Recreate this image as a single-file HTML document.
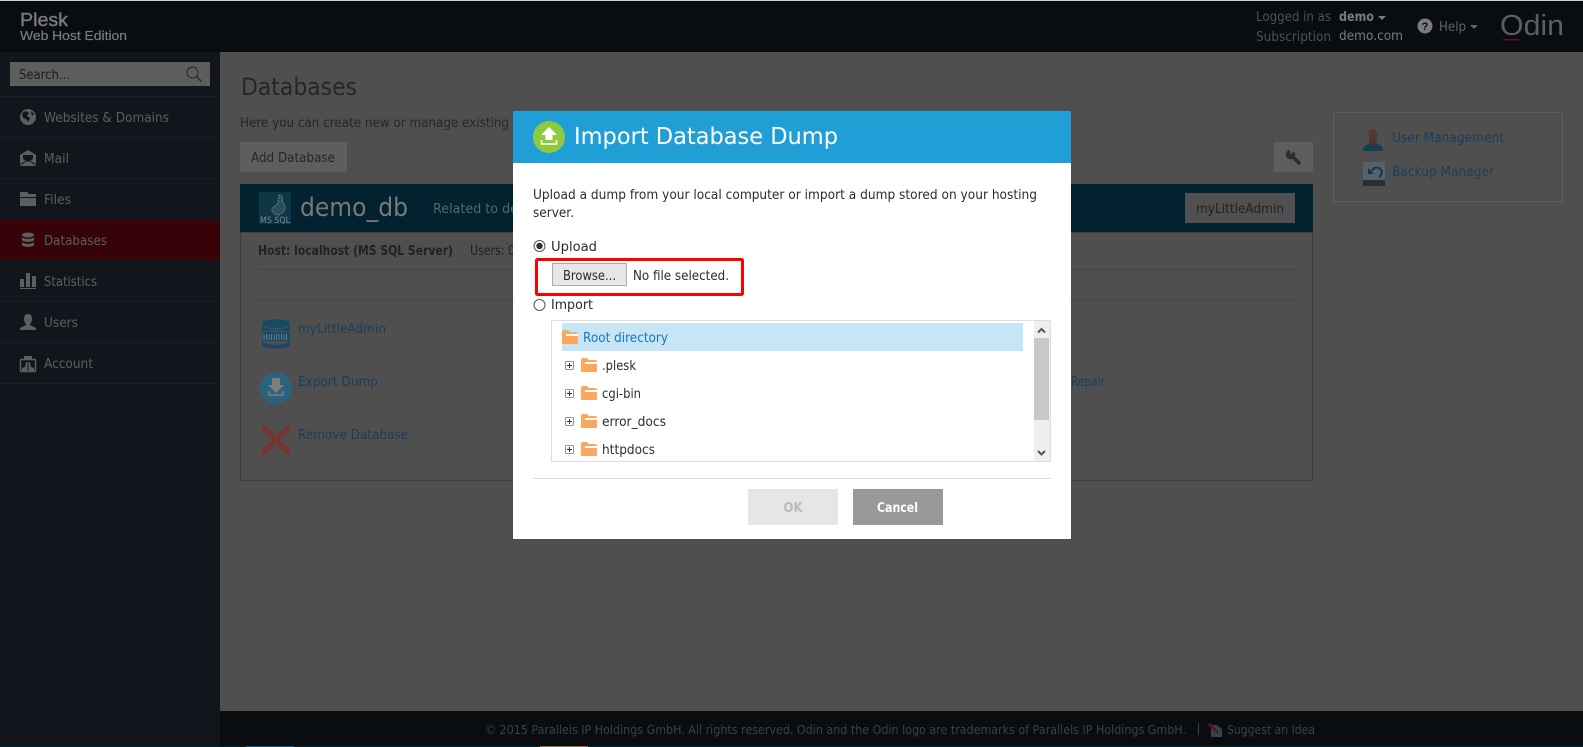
<!DOCTYPE html>
<html>
<head>
<meta charset="utf-8">
<title>Import Database Dump</title>
<style>
html,body{margin:0;padding:0;background:#4f4f4f;width:1583px;height:747px;overflow:hidden}
svg{display:block}
text{font-family:"DejaVu Sans","Liberation Sans",sans-serif;font-size:13px;white-space:pre}
.a{font-family:"Liberation Sans",sans-serif}
.nav{fill:#5c5e60}
.lnk{fill:#1a3e5a}
.drk{fill:#262626}
.dlg{fill:#2c2c2c}
.b{font-weight:bold}
</style>
</head>
<body>
<svg width="1583" height="747" viewBox="0 0 1583 747" xmlns="http://www.w3.org/2000/svg">
<defs>
<g id="fld">
<path d="M0 2q0-2 2-2h4l2 2h6q2 0 2 2v9q0 1-1 1H1q-1 0-1-1z" fill="#fca85c"/>
<path d="M4 4h12v2H4z" fill="#fff"/>
</g>
<g id="plus">
<rect x="0.5" y="0.5" width="8" height="8" rx="1" fill="#fff" stroke="#8a9aa3"/>
<path d="M2 4.5h5M4.5 2v5" stroke="#333" stroke-width="1"/>
</g>
</defs>

<!-- backgrounds -->
<rect width="1583" height="747" fill="#4f4f4f"/>
<rect y="0" width="1583" height="52" fill="#090c10"/>
<rect y="0" width="1583" height="1" fill="#cfcfcf"/>
<rect y="52" width="220" height="695" fill="#12161c"/>
<rect x="220" y="711" width="1363" height="36" fill="#090d10"/>
<rect x="0" y="746" width="1583" height="1" fill="#03222f"/>
<rect x="246" y="746" width="48" height="1" fill="#14557a"/>
<rect x="540" y="746" width="48" height="1" fill="#8a6d5a"/>

<!-- top bar -->
<text x="20" y="26" class="a" style="font-size:18px" fill="#7b7b7b" stroke="#7b7b7b" stroke-width="0.4" textLength="48" lengthAdjust="spacingAndGlyphs">Plesk</text>
<text x="20" y="40" class="a" style="font-size:13px" fill="#7b7b7b" stroke="#7b7b7b" stroke-width="0.2" textLength="107" lengthAdjust="spacingAndGlyphs">Web Host Edition</text>
<text x="1256" y="21" fill="#4f5153" textLength="75" lengthAdjust="spacingAndGlyphs">Logged in as</text>
<text x="1339" y="21" class="b" fill="#7c7c7c" textLength="35" lengthAdjust="spacingAndGlyphs">demo</text>
<path d="M1378 16h8l-4 4z" fill="#7c7c7c"/>
<text x="1256" y="41" fill="#4f5153" textLength="75" lengthAdjust="spacingAndGlyphs">Subscription</text>
<text x="1339" y="40" fill="#7c7c7c" textLength="64" lengthAdjust="spacingAndGlyphs">demo.com</text>
<circle cx="1425" cy="26" r="7.5" fill="#7c7c7c"/>
<text x="1425" y="30" class="a b" style="font-size:11px" text-anchor="middle" fill="#090c10">?</text>
<text x="1439" y="31" fill="#5f6163" textLength="27" lengthAdjust="spacingAndGlyphs">Help</text>
<path d="M1470 25h8l-4 4z" fill="#5f6163"/>
<text x="1500" y="35" class="a" style="font-size:29px" fill="#5c5e60" textLength="64" lengthAdjust="spacingAndGlyphs">Odin</text>
<rect x="1503" y="39" width="16" height="1.5" fill="#6b1015"/>

<!-- sidebar -->
<rect x="10" y="62" width="200" height="24" fill="#5e5e5e"/>
<text x="19" y="79" fill="#1a1a1a" textLength="51" lengthAdjust="spacingAndGlyphs">Search...</text>
<circle cx="192.500" cy="72.500" r="5.500" fill="none" stroke="#2e2e2e" stroke-width="1.200"/>
<path d="M196.500 76.500l5 5" stroke="#2e2e2e" stroke-width="1.600"/>
<g fill="#1a1e24">
<rect y="96" width="220" height="1"/>
<rect y="137" width="220" height="1"/>
<rect y="178" width="220" height="1"/>
<rect y="301" width="220" height="1"/>
<rect y="342" width="220" height="1"/>
<rect y="383" width="220" height="1"/>
</g>
<rect y="220" width="220" height="40" fill="#360308"/>

<circle cx="28" cy="117" r="8" fill="#5c5e60"/>
<path d="M22 113l4-2 3 2-2 3 3 2-2 4-2-3-3-1zM31 111l3 3-2 2z" fill="#12161c"/>
<text x="44" y="122" class="nav" textLength="125" lengthAdjust="spacingAndGlyphs">Websites &amp; Domains</text>

<path d="M20 155l8-5 8 5v11H20z" fill="#5c5e60"/>
<path d="M23 155h10v4l-5 3-5-3z" fill="#12161c"/>
<path d="M20 165l6-4M36 165l-6-4" stroke="#12161c" stroke-width="1"/>
<text x="44" y="163" class="nav" textLength="25" lengthAdjust="spacingAndGlyphs">Mail</text>

<path d="M20 192h7l2 2h7v3H20z" fill="#5c5e60"/>
<path d="M20 198h16v8H20z" fill="#5c5e60"/>
<text x="44" y="204" class="nav" textLength="27" lengthAdjust="spacingAndGlyphs">Files</text>

<g fill="#5c5e60">
<ellipse cx="28" cy="235" rx="6" ry="2.500"/>
<path d="M22 237.500q6 3 12 0v3q-6 3-12 0z"/>
<path d="M22 242.500q6 3 12 0v3q-6 3-12 0z"/>
</g>
<text x="44" y="245" class="nav" textLength="63" lengthAdjust="spacingAndGlyphs">Databases</text>

<g fill="#5c5e60">
<rect x="20" y="279" width="4" height="8"/>
<rect x="26" y="273" width="4" height="14"/>
<rect x="32" y="276" width="4" height="11"/>
<rect x="20" y="288" width="16" height="1"/>
</g>
<text x="44" y="286" class="nav" textLength="53" lengthAdjust="spacingAndGlyphs">Statistics</text>

<path d="M28 314c3 0 4 2 4 5 0 2-1 4-2 5v1l6 3v2H20v-2l6-3v-1c-1-1-2-3-2-5 0-3 1-5 4-5z" fill="#5c5e60"/>
<text x="44" y="327" class="nav" textLength="34" lengthAdjust="spacingAndGlyphs">Users</text>

<rect x="20.500" y="359.500" width="15" height="12" rx="1" fill="none" stroke="#5c5e60" stroke-width="1.500"/>
<rect x="24" y="356" width="8" height="3" fill="#5c5e60"/>
<path d="M22 371v-3l3-1 1-5h4l1 5 3 1v3z" fill="#5c5e60"/>
<path d="M28 362v9" stroke="#12161c" stroke-width="1"/>
<text x="44" y="368" class="nav" textLength="49" lengthAdjust="spacingAndGlyphs">Account</text>

<!-- main -->
<text x="241" y="95" style="font-size:24px" fill="#262626" textLength="116" lengthAdjust="spacingAndGlyphs">Databases</text>
<text x="240" y="127" class="drk" textLength="269" lengthAdjust="spacingAndGlyphs">Here you can create new or manage existing</text>
<rect x="240" y="142" width="107" height="30" fill="#5e5e5e"/>
<text x="251" y="162" fill="#262626" textLength="84" lengthAdjust="spacingAndGlyphs">Add Database</text>

<rect x="1274" y="142" width="39" height="30" fill="#5e5e5e"/>
<circle cx="1290.500" cy="154.500" r="4.800" fill="#2f2f2f"/>
<path d="M1290.500 154.500l-1-6.500 6.500 1.500z" fill="#5e5e5e"/>
<path d="M1292.500 156.500l6.500 6.500" stroke="#2f2f2f" stroke-width="3.600" stroke-linecap="round"/>

<rect x="240.500" y="232.500" width="1072" height="248" fill="none" stroke="#3e3e3e"/>
<rect x="240" y="184" width="1073" height="48" fill="#03222f"/>
<rect x="259" y="192" width="32" height="32" fill="#0e3646"/>
<path d="M279 195c4 1 4 4 3 6l3 5c1 3-2 7-6 9-3 0-7-2-7-5 0-3 4-4 6-7 1-2 0-5 1-8z" fill="#2a4d5c" stroke="#5d7886" stroke-width="1.200" stroke-dasharray="2 1"/>
<text x="260" y="223" style="font-size:9px" fill="#7b8b93" textLength="30" lengthAdjust="spacingAndGlyphs">MS SQL</text>
<text x="300" y="216" style="font-size:26px" fill="#787878" textLength="108" lengthAdjust="spacingAndGlyphs">demo_db</text>
<text x="433" y="213" fill="#55686f" textLength="85" lengthAdjust="spacingAndGlyphs">Related to de</text>
<rect x="1185" y="193" width="110" height="30" fill="#505050"/>
<text x="1196" y="213" fill="#222" textLength="88" lengthAdjust="spacingAndGlyphs">myLittleAdmin</text>

<text x="258" y="255" class="b" fill="#222" textLength="195" lengthAdjust="spacingAndGlyphs">Host: localhost (MS SQL Server)</text>
<text x="470" y="255" fill="#222" textLength="45" lengthAdjust="spacingAndGlyphs">Users: 0</text>
<rect x="258" y="269" width="1037" height="1" fill="#444"/>
<rect x="258" y="300" width="1037" height="1" fill="#444"/>

<g fill="#174a66">
<ellipse cx="276" cy="323.500" rx="14" ry="4.500"/>
<path d="M262 326q14 7 28 0v5H262z"/>
<path d="M262 332h28v9H262z"/>
<path d="M262 342q14 6 28 0v2c0 3-6 4.500-14 4.500s-14-1.500-14-4.500z"/>
</g>
<path d="M264 334v6M266.500 334v6M269 334v6M271.500 334v6M274 334v6M276.500 334v6M279 334v6M281.500 334v6M284 334v6M286.500 334v6" stroke="#6b8594" stroke-width="0.900"/>
<text x="298" y="333" class="lnk" textLength="88" lengthAdjust="spacingAndGlyphs">myLittleAdmin</text>

<circle cx="276" cy="388" r="16" fill="#2a627f"/>
<path d="M272 378h8v7h4l-8 8-8-8h4z" fill="#7f7f7f"/>
<path d="M269 391v4h14v-4" fill="none" stroke="#7f7f7f" stroke-width="1.500"/>
<text x="298" y="386" class="lnk" textLength="80" lengthAdjust="spacingAndGlyphs">Export Dump</text>

<path d="M263.500 427.500l25 25M288.500 427.500l-25 25" stroke="#723633" stroke-width="6" stroke-linecap="round"/>
<text x="298" y="439" class="lnk" textLength="110" lengthAdjust="spacingAndGlyphs">Remove Database</text>

<text x="1071" y="386" class="lnk" textLength="34" lengthAdjust="spacingAndGlyphs">Repair</text>

<!-- right box -->
<rect x="1333.500" y="112.500" width="229" height="89" fill="none" stroke="#5e5e5e"/>
<path d="M1363 150c0-5 6-6 8-7h4c2 1 8 2 8 7v1h-20z" fill="#123f57"/>
<ellipse cx="1373" cy="135" rx="4.500" ry="6" fill="#54392d"/>
<path d="M1369 140h8v4l-4 2-4-2z" fill="#4c372c"/>
<text x="1392" y="142" class="lnk" textLength="112" lengthAdjust="spacingAndGlyphs">User Management</text>
<rect x="1363" y="162" width="22" height="18" fill="#566268"/>
<rect x="1363" y="180" width="22" height="6" rx="1" fill="#2b2e30"/>
<path d="M1379 177a5 5 0 1 0-7-6" fill="none" stroke="#0f3a52" stroke-width="2"/>
<path d="M1368 168v6h6z" fill="#0f3a52"/>
<text x="1392" y="176" class="lnk" textLength="102" lengthAdjust="spacingAndGlyphs">Backup Manager</text>

<!-- footer -->
<text x="485" y="734" style="font-size:12px" fill="#3d4043" textLength="701" lengthAdjust="spacingAndGlyphs">© 2015 Parallels IP Holdings GmbH. All rights reserved. Odin and the Odin logo are trademarks of Parallels IP Holdings GmbH.</text>
<rect x="1198" y="723" width="1" height="12" fill="#3d4043"/>
<path d="M1211 725h6l5 4v8h-11z" fill="#2e4450"/>
<path d="M1208 725l2-2 9 9-1 2z" fill="#6b0f12"/>
<text x="1227" y="734" style="font-size:12px" fill="#3d4043" textLength="88" lengthAdjust="spacingAndGlyphs">Suggest an Idea</text>

<!-- dialog -->
<rect x="513" y="111" width="558" height="428" fill="#fff"/>
<rect x="513" y="111" width="558" height="52" fill="#209ed6"/>
<circle cx="549" cy="137" r="16" fill="#8fca3e"/>
<path d="M549 127l8 8h-4.500v5h-7v-5H541z" fill="#fff"/>
<path d="M541.500 140v4h15v-4" fill="none" stroke="#fff" stroke-width="1.500"/>
<text x="574" y="144" style="font-size:23px" fill="#fff" textLength="264" lengthAdjust="spacingAndGlyphs">Import Database Dump</text>

<text x="533" y="199" class="dlg" textLength="504" lengthAdjust="spacingAndGlyphs">Upload a dump from your local computer or import a dump stored on your hosting</text>
<text x="533" y="217" class="dlg" textLength="41" lengthAdjust="spacingAndGlyphs">server.</text>

<circle cx="539.500" cy="246" r="5.500" fill="#fff" stroke="#555" stroke-width="1"/>
<circle cx="539.500" cy="246" r="3.200" fill="#333"/>
<text x="551" y="251" class="dlg" textLength="46" lengthAdjust="spacingAndGlyphs">Upload</text>

<rect x="536.500" y="259.500" width="206" height="35" rx="1" fill="none" stroke="#f00" stroke-width="3"/>
<rect x="552.500" y="263.500" width="74" height="22" fill="#e6e6e6" stroke="#adadad"/>
<text x="563" y="280" class="dlg" textLength="53" lengthAdjust="spacingAndGlyphs">Browse...</text>
<text x="633" y="280" class="dlg" textLength="96" lengthAdjust="spacingAndGlyphs">No file selected.</text>

<circle cx="539.500" cy="305" r="5.500" fill="#fff" stroke="#555" stroke-width="1"/>
<text x="551" y="309" class="dlg" textLength="42" lengthAdjust="spacingAndGlyphs">Import</text>

<rect x="551.500" y="320.500" width="499" height="141" fill="#fff" stroke="#ddd"/>
<rect x="562" y="323" width="461" height="28" fill="#c6e6f5"/>
<use href="#fld" x="562" y="330"/>
<text x="583" y="342" fill="#1a75bb" textLength="85" lengthAdjust="spacingAndGlyphs">Root directory</text>

<use href="#plus" x="565" y="361"/>
<use href="#fld" x="581" y="358"/>
<text x="602" y="370" class="dlg" textLength="34" lengthAdjust="spacingAndGlyphs">.plesk</text>
<use href="#plus" x="565" y="389"/>
<use href="#fld" x="581" y="386"/>
<text x="602" y="398" class="dlg" textLength="39" lengthAdjust="spacingAndGlyphs">cgi-bin</text>
<use href="#plus" x="565" y="417"/>
<use href="#fld" x="581" y="414"/>
<text x="602" y="426" class="dlg" textLength="64" lengthAdjust="spacingAndGlyphs">error_docs</text>
<use href="#plus" x="565" y="445"/>
<use href="#fld" x="581" y="442"/>
<text x="602" y="454" class="dlg" textLength="53" lengthAdjust="spacingAndGlyphs">httpdocs</text>

<rect x="1034" y="321" width="16" height="140" fill="#efefef"/>
<rect x="1034" y="338" width="15" height="82" fill="#c8c8c8"/>
<path d="M1038 332.500l3.500-3.500 3.500 3.500M1038 451l3.500 3.500 3.500-3.500" fill="none" stroke="#555" stroke-width="2"/>

<rect x="533" y="478" width="518" height="1" fill="#ddd"/>
<rect x="748" y="489" width="90" height="36" fill="#e6e6e6"/>
<text x="793" y="512" class="b" text-anchor="middle" fill="#bbb" textLength="19" lengthAdjust="spacingAndGlyphs">OK</text>
<rect x="853" y="489" width="90" height="36" fill="#999"/>
<text x="877" y="512" class="b" fill="#fff" textLength="41" lengthAdjust="spacingAndGlyphs">Cancel</text>
</svg>
</body>
</html>
